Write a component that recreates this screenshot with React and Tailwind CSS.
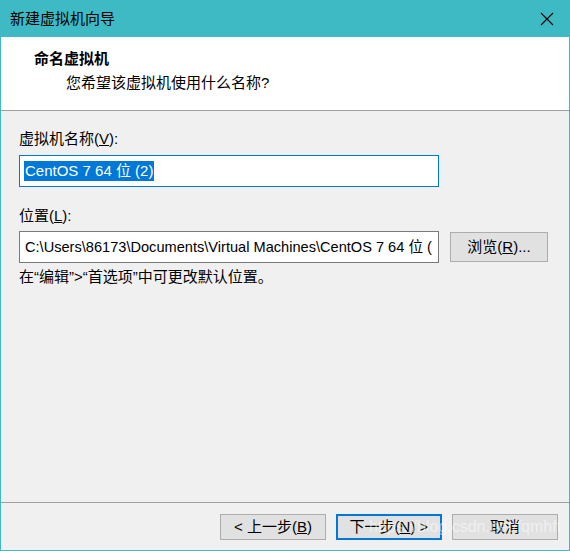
import React from 'react'

const FONT = { fontFamily: '"Liberation Sans", "Noto Sans CJK SC", sans-serif' }

function Btn({ children, focused }) {
  return (
    <button
      className={
        'w-[106px] h-[26px] flex items-center justify-center text-[15px] text-black bg-[#e1e1e1] ' +
        (focused ? 'border-2 border-[#0078d7]' : 'border border-[#adadad]')
      }
    >
      {children}
    </button>
  )
}

export default function App() {
  return (
    <div className="w-[570px] h-[551px] bg-[#3dbac3] flex flex-col" style={FONT}>
      {/* Title bar */}
      <div className="h-[37px] flex items-center justify-between pl-[10px] pr-[16px] shrink-0">
        <span className="text-[15px] text-black leading-none">新建虚拟机向导</span>
        <svg width="14" height="14" viewBox="0 0 14 14" className="text-black">
          <path d="M1 1 L13 13 M13 1 L1 13" stroke="currentColor" strokeWidth="1.1" />
        </svg>
      </div>

      <div className="flex-1 mx-[1px] mb-[1px] bg-[#f0f0f0] flex flex-col relative">
        {/* Header */}
        <div className="h-[74px] bg-white border-b border-[#a0a0a0] shrink-0 pt-[12px]">
          <div className="pl-[33px] text-[15px] font-bold text-black leading-[20px]">命名虚拟机</div>
          <div className="pl-[65px] mt-[4px] text-[15px] text-black leading-[20px]">您希望该虚拟机使用什么名称?</div>
        </div>

        {/* Body */}
        <div className="flex-1 px-[18px] pt-[18px]">
          <div className="text-[15px] text-black leading-[20px]">
            虚拟机名称(<span className="underline">V</span>):
          </div>
          <div className="mt-[6px] w-[420px] h-[32px] border border-[#0078d7] bg-white flex items-center pl-[4px]">
            <span className="bg-[#0078d7] text-white text-[15px] leading-[20px] px-[1px]">CentOS 7 64 位 (2)</span>
          </div>

          <div className="mt-[19px] text-[15px] text-black leading-[20px]">
            位置(<span className="underline">L</span>):
          </div>
          <div className="mt-[5px] flex items-center gap-[11px]">
            <div className="w-[420px] h-[32px] border border-[#7a7a7a] bg-white flex items-center pl-[5px] overflow-hidden">
              <span className="text-[14.6px] text-black leading-[20px] whitespace-nowrap">
                C:\Users\86173\Documents\Virtual Machines\CentOS 7 64 位 (
              </span>
            </div>
            <button className="w-[98px] h-[30px] bg-[#e1e1e1] border border-[#adadad] text-[15px] text-black flex items-center justify-center">
              浏览(<span className="underline">R</span>)...
            </button>
          </div>
          <div className="mt-[4px] text-[15px] text-black leading-[20px]">
            在“编辑”&gt;“首选项”中可更改默认位置。
          </div>
        </div>

        {/* Footer */}
        <div className="h-[48px] border-t border-[#a0a0a0] shrink-0 flex items-start justify-end gap-[10px] pr-[11px] pt-[11px]">
          <Btn>&lt; 上一步(<span className="underline">B</span>)</Btn>
          <Btn focused>下一步(<span className="underline">N</span>) &gt;</Btn>
          <Btn>取消</Btn>
        </div>

        {/* Watermark */}
        <div
          className="absolute left-[368px] bottom-[11px] text-[16px] text-white/50 pointer-events-none whitespace-nowrap"
          style={{ fontFamily: '"Liberation Sans", Arial, sans-serif' }}
        >
          https://blog.csdn.net/fqmhft
        </div>
      </div>
    </div>
  )
}
